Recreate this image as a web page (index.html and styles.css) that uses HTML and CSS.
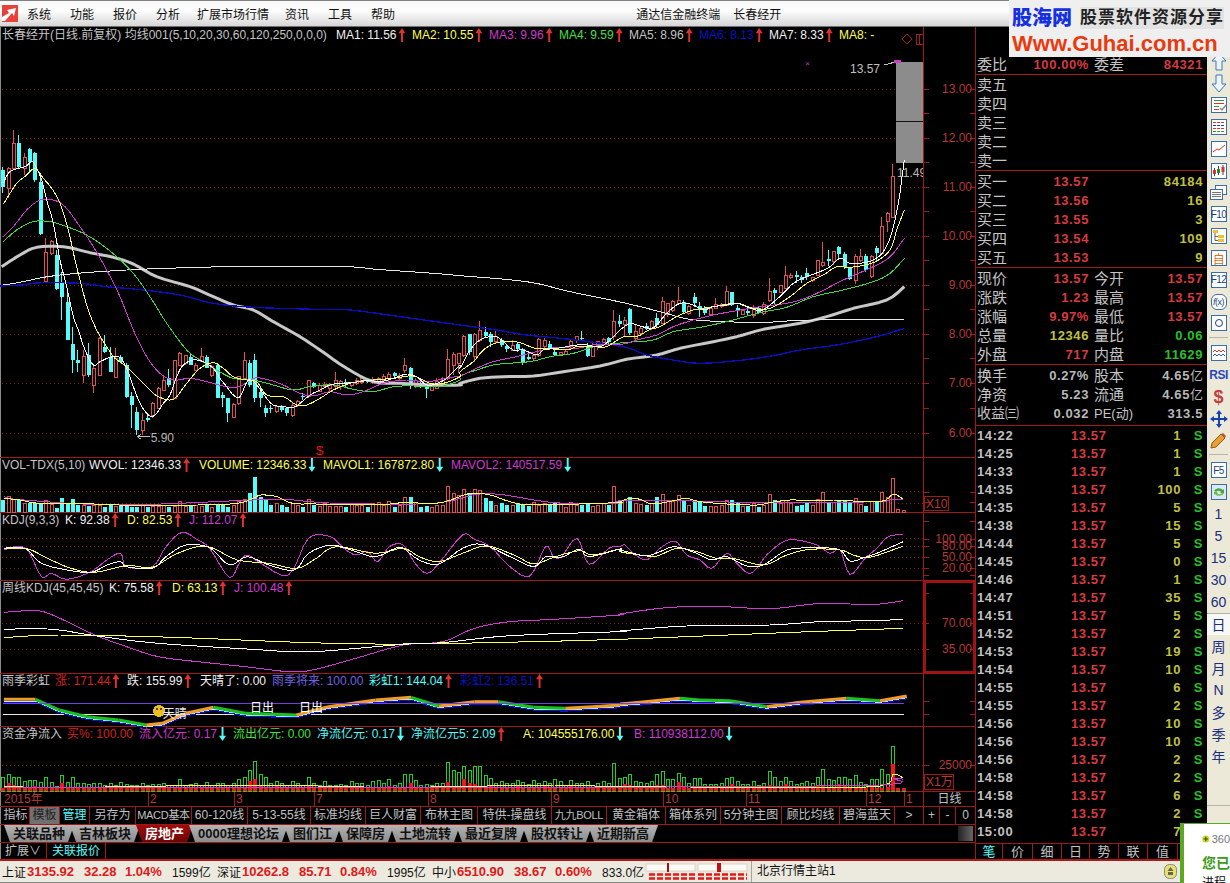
FILE: index.html
```html
<!DOCTYPE html>
<html lang="zh-CN">
<head>
    <meta charset="UTF-8">
    <title>通达信金融终端 长春经开</title>
    <link rel="stylesheet" href="styles.css">
</head>
<body>
<div class="app">
    <div class="titlebar">
        <svg class="app-icon" width="16" height="17" viewBox="0 0 16 17"><rect width="16" height="17" fill="#e8413a"/><path d="M0 12 L7 8 L5 5 L14 3 L12 11 L10 8 L3 16 L0 16Z" fill="#fff"/></svg>
        <span class="menu">系统</span>
        <span class="menu">功能</span>
        <span class="menu">报价</span>
        <span class="menu">分析</span>
        <span class="menu">扩展市场行情</span>
        <span class="menu">资讯</span>
        <span class="menu">工具</span>
        <span class="menu">帮助</span>
        <span class="app-title">通达信金融终端</span>
        <span class="app-title">长春经开</span>
    </div>

    <div class="main">
        <div class="chart">
            <div class="pane pane-main">
                <div class="plot">
                    <svg id="p-main"></svg>
                    <div class="head head-main">
                        <span class="c-gray">长春经开(日线.前复权) 均线001(5,10,20,30,60,120,250,0,0,0)</span>
                        <span class="c-white">MA1: 11.56<i class="up"></i></span>
                        <span class="c-yellow">MA2: 10.55<i class="up"></i></span>
                        <span class="c-magenta">MA3: 9.96<i class="up"></i></span>
                        <span class="c-green">MA4: 9.59<i class="up"></i></span>
                        <span class="c-gray">MA5: 8.96<i class="up"></i></span>
                        <span class="c-blue">MA6: 8.13<i class="up"></i></span>
                        <span class="c-white">MA7: 8.33<i class="up"></i></span>
                        <span class="c-yellow">MA8: -</span>
                    </div>
                </div>
                <svg class="axis" id="a-main"></svg>
            </div>
            <div class="pane pane-vol">
                <div class="plot">
                    <svg id="p-vol"></svg>
                    <div class="head head-vol">
                        <span class="c-gray">VOL-TDX(5,10)</span>
                        <span class="c-white">WVOL: 12346.33<i class="up"></i></span>
                        <span class="c-yellow">VOLUME: 12346.33<i class="down"></i></span>
                        <span class="c-yellow">MAVOL1: 167872.80<i class="down"></i></span>
                        <span class="c-magenta">MAVOL2: 140517.59<i class="down"></i></span>
                    </div>
                </div>
                <svg class="axis" id="a-vol"></svg>
            </div>
            <div class="pane pane-kdj">
                <div class="plot">
                    <svg id="p-kdj"></svg>
                    <div class="head head-kdj">
                        <span class="c-gray">KDJ(9,3,3)</span>
                        <span class="c-white">K: 92.38<i class="up"></i></span>
                        <span class="c-yellow">D: 82.53<i class="up"></i></span>
                        <span class="c-magenta">J: 112.07<i class="up"></i></span>
                    </div>
                </div>
                <svg class="axis" id="a-kdj"></svg>
            </div>
            <div class="pane pane-week">
                <div class="plot">
                    <svg id="p-week"></svg>
                    <div class="head head-week">
                        <span class="c-gray">周线KDJ(45,45,45)</span>
                        <span class="c-white">K: 75.58<i class="up"></i></span>
                        <span class="c-yellow">D: 63.13<i class="up"></i></span>
                        <span class="c-magenta">J: 100.48<i class="up"></i></span>
                    </div>
                </div>
                <svg class="axis" id="a-week"></svg>
            </div>
            <div class="pane pane-rain">
                <div class="plot">
                    <svg id="p-rain"></svg>
                    <div class="head head-rain">
                        <span class="c-gray">雨季彩虹</span>
                        <span class="c-red">涨: 171.44<i class="up"></i></span>
                        <span class="c-white">跌: 155.99<i class="up"></i></span>
                        <span class="c-white">天晴了: 0.00</span>
                        <span class="c-purple">雨季将来: 100.00</span>
                        <span class="c-cyan">彩虹1: 144.04<i class="up"></i></span>
                        <span class="c-blue">彩虹2: 136.51<i class="up"></i></span>
                    </div>
                </div>
                <svg class="axis" id="a-rain"></svg>
            </div>
            <div class="pane pane-money">
                <div class="plot">
                    <svg id="p-money"></svg>
                    <div class="head head-money">
                        <span class="c-gray">资金净流入</span>
                        <span class="c-red">买%: 100.00</span>
                        <span class="c-magenta">流入亿元: 0.17<i class="down"></i></span>
                        <span class="c-green">流出亿元: 0.00</span>
                        <span class="c-cyan">净流亿元: 0.17<i class="down"></i></span>
                        <span class="c-cyan">净流亿元5: 2.09<i class="up"></i></span>
                        <span class="c-yellow">A: 104555176.00<i class="down"></i></span>
                        <span class="c-magenta">B: 110938112.00<i class="down"></i></span>
                    </div>
                </div>
                <svg class="axis" id="a-money"></svg>
            </div>
            <div class="pane pane-dates">
                <div class="plot"><svg id="p-dates"></svg></div>
                <div class="period">日线</div>
            </div>

            <div class="tabrow">
                <span>指标</span>
                <span class="tab-on">模板</span>
                <span class="c-cyan">管理</span>
                <span>另存为</span>
                <span class="tab-tight">MACD基本</span>
                <span>60-120线</span>
                <span>5-13-55线</span>
                <span>标准均线</span>
                <span>巨人财富</span>
                <span>布林主图</span>
                <span>特供-操盘线</span>
                <span class="tab-tight">九九BOLL</span>
                <span>黄金箱体</span>
                <span>箱体系列</span>
                <span>5分钟主图</span>
                <span>顾比均线</span>
                <span>碧海蓝天</span>
                <span>&gt;</span>
                <span>+</span>
                <span>-</span>
                <span>0</span>
            </div>

            <div class="blockrow">
                <span class="btab">关联品种</span>
                <span class="btab">吉林板块</span>
                <span class="btab btab-on">房地产</span>
                <span class="btab">0000理想论坛</span>
                <span class="btab">图们江</span>
                <span class="btab">保障房</span>
                <span class="btab">土地流转</span>
                <span class="btab">最近复牌</span>
                <span class="btab">股权转让</span>
                <span class="btab">近期新高</span>
                <span class="thumb"></span>
            </div>

            <div class="extrow">
                <span>扩展∨</span>
                <span class="c-cyan">关联报价</span>
            </div>
        </div>

        <div class="quote">
            <div class="q-sec q-first">
                <div class="q-row"><span class="lb">委比</span><span class="v-red">100.00%</span><span class="lb">委差</span><span class="v-red">84321</span></div>
            </div>
            <div class="q-sec">
                <div class="q-row"><span class="lb">卖五</span></div>
                <div class="q-row"><span class="lb">卖四</span></div>
                <div class="q-row"><span class="lb">卖三</span></div>
                <div class="q-row"><span class="lb">卖二</span></div>
                <div class="q-row"><span class="lb">卖一</span></div>
            </div>
            <div class="q-sec q-pad">
                <div class="q-row"><span class="lb">买一</span><span class="v-red">13.57</span><span></span><span class="v-olive">84184</span></div>
                <div class="q-row"><span class="lb">买二</span><span class="v-red">13.56</span><span></span><span class="v-olive">16</span></div>
                <div class="q-row"><span class="lb">买三</span><span class="v-red">13.55</span><span></span><span class="v-olive">3</span></div>
                <div class="q-row"><span class="lb">买四</span><span class="v-red">13.54</span><span></span><span class="v-olive">109</span></div>
                <div class="q-row"><span class="lb">买五</span><span class="v-red">13.53</span><span></span><span class="v-olive">9</span></div>
            </div>
            <div class="q-sec q-pad">
                <div class="q-row"><span class="lb">现价</span><span class="v-red">13.57</span><span class="lb">今开</span><span class="v-red">13.57</span></div>
                <div class="q-row"><span class="lb">涨跌</span><span class="v-red">1.23</span><span class="lb">最高</span><span class="v-red">13.57</span></div>
                <div class="q-row"><span class="lb">涨幅</span><span class="v-red">9.97%</span><span class="lb">最低</span><span class="v-red">13.57</span></div>
                <div class="q-row"><span class="lb">总量</span><span class="v-olive">12346</span><span class="lb">量比</span><span class="v-green">0.06</span></div>
                <div class="q-row"><span class="lb">外盘</span><span class="v-red">717</span><span class="lb">内盘</span><span class="v-green">11629</span></div>
            </div>
            <div class="q-sec q-last">
                <div class="q-row"><span class="lb">换手</span><span class="v-gray">0.27%</span><span class="lb">股本</span><span class="v-gray">4.65<em>亿</em></span></div>
                <div class="q-row"><span class="lb">净资</span><span class="v-gray">5.23</span><span class="lb">流通</span><span class="v-gray">4.65<em>亿</em></span></div>
                <div class="q-row"><span class="lb lb-wide">收益㈢</span><span class="v-gray">0.032</span><span class="lb lb-pe">PE(动)</span><span class="v-gray">313.5</span></div>
            </div>
            <div class="ticks" id="ticks">
                <div class="t-row"><span>14:22</span><span>13.57</span><span>1</span><span>S</span></div>
                <div class="t-row"><span>14:25</span><span>13.57</span><span>1</span><span>S</span></div>
                <div class="t-row"><span>14:33</span><span>13.57</span><span>1</span><span>S</span></div>
                <div class="t-row"><span>14:35</span><span>13.57</span><span>100</span><span>S</span></div>
                <div class="t-row"><span>14:35</span><span>13.57</span><span>5</span><span>S</span></div>
                <div class="t-row"><span>14:38</span><span>13.57</span><span>15</span><span>S</span></div>
                <div class="t-row"><span>14:44</span><span>13.57</span><span>5</span><span>S</span></div>
                <div class="t-row"><span>14:45</span><span>13.57</span><span>0</span><span>S</span></div>
                <div class="t-row"><span>14:46</span><span>13.57</span><span>1</span><span>S</span></div>
                <div class="t-row"><span>14:47</span><span>13.57</span><span>35</span><span>S</span></div>
                <div class="t-row"><span>14:51</span><span>13.57</span><span>5</span><span>S</span></div>
                <div class="t-row"><span>14:52</span><span>13.57</span><span>2</span><span>S</span></div>
                <div class="t-row"><span>14:53</span><span>13.57</span><span>19</span><span>S</span></div>
                <div class="t-row"><span>14:54</span><span>13.57</span><span>10</span><span>S</span></div>
                <div class="t-row"><span>14:55</span><span>13.57</span><span>6</span><span>S</span></div>
                <div class="t-row"><span>14:55</span><span>13.57</span><span>2</span><span>S</span></div>
                <div class="t-row"><span>14:56</span><span>13.57</span><span>10</span><span>S</span></div>
                <div class="t-row"><span>14:56</span><span>13.57</span><span>10</span><span>S</span></div>
                <div class="t-row"><span>14:56</span><span>13.57</span><span>2</span><span>S</span></div>
                <div class="t-row"><span>14:58</span><span>13.57</span><span>2</span><span>S</span></div>
                <div class="t-row"><span>14:58</span><span>13.57</span><span>6</span><span>S</span></div>
                <div class="t-row"><span>14:58</span><span>13.57</span><span>2</span><span>S</span></div>
                <div class="t-row"><span>15:00</span><span>13.57</span><span>7</span><span></span></div>
            </div>
            <div class="q-tabs">
                <span class="c-cyan">笔</span><span>价</span><span>细</span><span>日</span><span>势</span><span>联</span><span>值</span><span></span>
            </div>
        </div>

        <div class="toolbar">
            <div class="tool"><svg width="16" height="19" viewBox="0 0 16 19"><path d="M8 1 L15 9 H11 V18 H5 V9 H1Z" fill="#eef4fb" stroke="#3a78c0"/></svg></div>
            <div class="tool"><svg width="16" height="19" viewBox="0 0 16 19"><path d="M8 18 L15 10 H11 V1 H5 V10 H1Z" fill="#eef4fb" stroke="#3a78c0"/></svg></div>
            <div class="tool"><svg width="16" height="16" viewBox="0 0 16 16"><rect x=".5" y=".5" width="15" height="15" fill="#fff" stroke="#3a6ea5"/><path d="M3 3.5h10" stroke="#2a9a3a"/><path d="M3 6.5h10" stroke="#d8342c"/><path d="M3 9.5h5" stroke="#2a9a3a"/><path d="M3 12.5h5" stroke="#d8342c"/><path d="M9 11l2 2 4-5" fill="none" stroke="#888" stroke-width="1.5"/></svg></div>
            <div class="tool"><svg width="16" height="16" viewBox="0 0 16 16"><rect x=".5" y=".5" width="15" height="15" fill="#fff" stroke="#3a6ea5"/><path d="M2 3.5h12" stroke="#d8342c" stroke-dasharray="3 1"/><path d="M2 6.5h12" stroke="#1a3fae" stroke-dasharray="3 1"/><path d="M2 9.5h12" stroke="#d8342c" stroke-dasharray="3 1"/><path d="M2 12.5h12" stroke="#2a9a3a" stroke-dasharray="3 1"/></svg></div>
            <div class="tool"><svg width="16" height="16" viewBox="0 0 16 16"><rect x=".5" y=".5" width="15" height="15" fill="#fff" stroke="#3a6ea5"/><path d="M2 11 L6 8 L8 9 L14 4" fill="none" stroke="#d8342c"/></svg></div>
            <div class="tool"><svg width="16" height="16" viewBox="0 0 16 16"><rect x=".5" y=".5" width="15" height="15" fill="#fff" stroke="#3a6ea5"/><path d="M3.5 5v8M7.5 3v9M12 2v10" stroke="#444"/><rect x="2" y="7" width="3" height="4" fill="#d8342c"/><rect x="6" y="6" width="3" height="4" fill="#1d8a30"/><rect x="10.5" y="4" width="3" height="5" fill="#d8342c"/></svg></div>
            <div class="tool"><svg width="17" height="15" viewBox="0 0 17 15"><rect x="5.5" y=".5" width="11" height="9" fill="#fff" stroke="#3a6ea5"/><rect x=".5" y="4.5" width="12" height="10" fill="#fff" stroke="#3a6ea5"/><path d="M2 7.5h9M2 9.5h9M2 11.5h9" stroke="#777"/></svg></div>
            <div class="tool"><span class="tb-box">F10</span></div>
            <div class="tool"><svg width="16" height="16" viewBox="0 0 16 16"><rect x=".5" y=".5" width="15" height="15" fill="#fff" stroke="#3a6ea5"/><rect x="2" y="2" width="5" height="3" fill="#f0c030"/><rect x="7" y="7" width="6" height="3" fill="#f0c030"/><rect x="7" y="11" width="6" height="3" fill="#f0c030"/><path d="M4 5v7.5h3M4 8.5h3" fill="none" stroke="#666"/></svg></div>
            <div class="tool"><span class="tb-box tb-orange">自</span></div>
            <div class="tool"><span class="tb-box">F12</span></div>
            <div class="tool"><span class="tb-box tb-round"><em>f</em>(x)</span></div>
            <div class="tool"><svg width="16" height="16" viewBox="0 0 16 16"><rect x=".5" y=".5" width="15" height="15" fill="#fff" stroke="#3a6ea5"/><circle cx="8" cy="8" r="3.5" fill="none" stroke="#1a3f7e"/></svg></div>
            <div class="tool-sep"></div>
            <div class="tool"><svg width="16" height="16" viewBox="0 0 16 16"><rect x=".5" y=".5" width="15" height="15" fill="#fff" stroke="#3a6ea5"/><path d="M2 7l2-2 2 2 2-2 2 2 2-2 2 2" fill="none" stroke="#d8342c"/><path d="M2 11l2-2 2 2 2-2 2 2 2-2 2 2" fill="none" stroke="#3a4fc0"/></svg></div>
            <div class="tool"><span class="tb-rsi">RSI</span></div>
            <div class="tool"><span class="tb-dollar">$</span></div>
            <div class="tool"><svg width="18" height="18" viewBox="0 0 18 18"><path d="M9 0l3 4h-2v4h4V6l4 3-4 3v-2h-4v4h2l-3 4-3-4h2v-4H4v2L0 9l4-3v2h4V4H6Z" fill="#1440b0"/></svg></div>
            <div class="tool"><svg width="17" height="17" viewBox="0 0 17 17"><path d="M1 16l1-5L11 2l4 4-9 9Z" fill="#e8a030" stroke="#8a5a18"/><path d="M11 2l2-1 3 3-1 2Z" fill="#c85040"/></svg></div>
            <div class="tool-sep"></div>
            <div class="tool"><span class="tb-box">F5</span></div>
            <div class="tool"><svg width="16" height="16" viewBox="0 0 16 16"><rect x=".5" y=".5" width="15" height="15" fill="#dce8f8" stroke="#3a6ea5"/><path d="M3 7a5 4 0 0 1 9-1l1-1v4h-4l1-1a3 3 0 0 0-5 0Z" fill="#4aa83a"/><path d="M13 9a5 4 0 0 1-9 1l-1 1V8h4l-1 1a3 3 0 0 0 5 0Z" fill="#6cc04a"/></svg></div>
            <div class="tool tool-txt">1</div>
            <div class="tool tool-txt">5</div>
            <div class="tool tool-txt">15</div>
            <div class="tool tool-txt">30</div>
            <div class="tool tool-txt">60</div>
            <div class="tool tool-txt tool-on">日</div>
            <div class="tool tool-txt">周</div>
            <div class="tool tool-txt">月</div>
            <div class="tool tool-txt">N</div>
            <div class="tool tool-txt">多</div>
            <div class="tool tool-txt">季</div>
            <div class="tool tool-txt">年</div>
            <div class="tool-end"></div>
        </div>
    </div>

    <div class="statusbar">
        <span class="st-name">上证</span><b class="st-a">3135.92</b><b class="st-b">32.28</b><b class="st-c">1.04%</b><span class="st-d">1599亿</span>
        <span class="st-name st-next">深证</span><b class="st-a">10262.8</b><b class="st-b">85.71</b><b class="st-c">0.84%</b><span class="st-d">1995亿</span>
        <span class="st-name st-next">中小</span><b class="st-a">6510.90</b><b class="st-b">38.67</b><b class="st-c">0.60%</b><span class="st-d">833.0亿</span>
        <svg class="signal" width="104" height="20" viewBox="0 0 104 20">
            <rect x="1" y="2" width="49" height="7" fill="#fbfaf4" stroke="#d8d4c6"/>
            <rect x="53" y="2" width="49" height="7" fill="#fbfaf4" stroke="#d8d4c6"/>
            <rect x="22" y="1" width="2" height="9" fill="#a01010"/>
            <rect x="72" y="1" width="4" height="9" fill="#c01010"/>
            <path d="M4 12.5h46M4 16.5h46M53 12.5h49M53 16.5h49" stroke="#e01818" stroke-width="2.5" stroke-dasharray="6 2"/>
        </svg>
        <span class="station">北京行情主站1</span>
        <svg class="st-icon" width="13" height="15" viewBox="0 0 13 15"><rect x=".5" y=".5" width="12" height="14" rx="5" fill="#e8e070" stroke="#888"/><path d="M6.5 3l3 4h-6Z M4 8h5v3H4Z" fill="#665"/></svg>
    </div>

    <div class="logo">
        <div class="logo-top"><b>股海网</b><span>股票软件资源分享</span></div>
        <div class="logo-url">Www.Guhai.com.cn</div>
    </div>

    <div class="popup">
        <div class="popup-top"><svg width="14" height="14" viewBox="0 0 14 14"><circle cx="7" cy="7" r="6.5" fill="#d8d020"/><path d="M6 3h2v3h3v2H8v3H6V8H3V6h3Z" fill="#1a5a10"/></svg><span>360</span></div>
        <div class="popup-title">您已经</div>
        <div class="popup-text">进程</div>
    </div>
</div>
<script src="chart.js"></script>
</body>
</html>
```

FILE: styles.css
```css
* {
    margin: 0;
    padding: 0;
    box-sizing: border-box;
}

html, body {
    width: 1230px;
    height: 883px;
    overflow: hidden;
    background: #000;
}

body {
    font-family: "Liberation Sans", "Noto Sans CJK SC", sans-serif;
    font-size: 12px;
    color: #c0c0c0;
}

i, em { font-style: normal; }

.c-gray { color: #c4c4c4; }
.c-white { color: #f0f0f0; }
.c-yellow { color: #ffff50; }
.c-magenta { color: #d038d0; }
.c-green { color: #40e040; }
.c-blue { color: #0a10c0; }
.c-red { color: #d82020; }
.c-purple { color: #7060e0; }
.c-cyan { color: #54fcfc; }

.app {
    position: relative;
    width: 1230px;
    height: 883px;
    display: flex;
    flex-direction: column;
}

/* title bar */
.titlebar {
    height: 27px;
    flex-shrink: 0;
    display: flex;
    align-items: center;
    padding-left: 2px;
    border-top: 1px solid #808080;
    border-bottom: 1px solid #707070;
    background: linear-gradient(#f8f8f8, #fdfdfd 40%, #d6d6d6);
    color: #111;
}

.app-icon { margin-right: 9px; }
.menu { margin-right: 19px; }
.menu:nth-of-type(4) { margin-right: 17px; }
.menu:nth-of-type(5) { margin-right: 16px; }
.app-title { margin-right: 13px; }
.menu + .app-title { margin-left: 222px; }

.main {
    flex: 1;
    display: flex;
    min-height: 0;
}

/* chart column */
.chart {
    width: 975px;
    flex-shrink: 0;
    box-shadow: inset 1px 0 #8a8a8a;
}

.pane {
    display: flex;
    border-bottom: 1px solid #a01818;
}

.pane-main { height: 431px; }
.pane-vol { height: 55px; }
.pane-kdj { height: 68px; }
.pane-week { height: 93px; }
.pane-rain { height: 53px; }
.pane-money { height: 65px; }
.pane-dates { height: 15px; }

.plot {
    position: relative;
    width: 923px;
    flex-shrink: 0;
}

.plot svg {
    display: block;
    shape-rendering: crispEdges;
    overflow: hidden;
}

.plot text, .axis text {
    font-family: "Liberation Sans", "Noto Sans CJK SC", sans-serif;
}

.axis {
    display: block;
    width: 52px;
    shape-rendering: crispEdges;
    font-size: 12px;
}

.head {
    position: absolute;
    top: 0;
    left: 0;
    padding-left: 2px;
    display: grid;
    white-space: nowrap;
    line-height: 15px;
}

.head-main { grid-template-columns: 334px 76px 77px 70px 70px 70px 70px 70px auto; }
.head-vol { grid-template-columns: 87px 110px 124px 128px auto; }
.head-kdj { grid-template-columns: 63px 62px 62px auto; }
.head-week { grid-template-columns: 107px 63px 62px auto; }
.head-rain { grid-template-columns: 53px 72px 73px 72px 97px 91px auto; }
.head-money { grid-template-columns: 65px 72px 94px 84px 94px 112px 111px auto; }
.pane-main .head { top: 1px; }

.up, .down {
    display: inline-block;
    width: 7px;
    height: 14px;
    margin-left: 2px;
    vertical-align: -3px;
}

.up {
    background: #e03030;
    clip-path: polygon(50% 0, 100% 38%, 64% 38%, 64% 100%, 36% 100%, 36% 38%, 0 38%);
}

.down {
    background: #54fcfc;
    clip-path: polygon(36% 0, 64% 0, 64% 62%, 100% 62%, 50% 100%, 0 62%, 36% 62%);
}

.period {
    width: 52px;
    border-left: 1px solid #a01818;
    color: #c0c0c0;
    text-align: center;
    line-height: 14px;
}

/* template row */
.tabrow {
    height: 18px;
    padding-left: 2px;
    display: grid;
    grid-template-columns: 28px 30px 30px 46px 56px 56px 63px 55px 55px 57px 74px 55px 59px 55px 61px 58px 55px 29px 16px 16px 19px;
    border-bottom: 1px solid #a01818;
    line-height: 17px;
    text-align: center;
    white-space: nowrap;
    box-shadow: inset 1px 0 #8a8a8a;
}

.tabrow span {
    border-right: 1px solid #a01818;
    overflow: hidden;
}

.tabrow span:last-child { border-right: none; }

.tabrow .tab-tight {
    font-size: 11px;
    letter-spacing: -.3px;
}

.tab-on {
    background: #707070;
    color: #222;
}

/* block tabs */
.blockrow {
    position: relative;
    height: 18px;
    padding-left: 4px;
    display: flex;
    border-bottom: 1px solid #a01818;
    box-shadow: inset 1px 0 #8a8a8a;
}

.btab {
    height: 17px;
    padding: 0 9px;
    margin-right: -4px;
    background: linear-gradient(#b4b4b4, #8c8c8c);
    clip-path: polygon(0 0, 100% 0, calc(100% - 6px) 100%, 6px 100%);
    color: #111;
    font-size: 13px;
    font-weight: 700;
    line-height: 17px;
    white-space: nowrap;
}

.btab-on {
    background: linear-gradient(#a00c0c, #6a0606);
    color: #fff;
}

.thumb {
    position: absolute;
    left: 958px;
    top: 1px;
    width: 15px;
    height: 15px;
    background: linear-gradient(90deg, #222, #666);
}

.extrow {
    height: 18px;
    display: flex;
    border-bottom: 2px solid #b01818;
    line-height: 16px;
    box-shadow: inset 1px 0 #8a8a8a;
}

.extrow span {
    padding: 0 5px;
    border-right: 1px solid #a01818;
    white-space: nowrap;
}

/* quote panel */
.quote {
    width: 232px;
    flex-shrink: 0;
    border-left: 1px solid #a01818;
    display: flex;
    flex-direction: column;
}

.q-sec { border-bottom: 1px solid #a01818; }
.q-first { padding-top: 28px; }
.q-pad { padding-top: 1px; }
.q-last { height: 61px; padding-top: 1px; }

.q-row {
    height: 19px;
    padding-left: 1px;
    display: grid;
    grid-template-columns: 46px 66px 5px 37px 72px;
    align-items: center;
    line-height: 19px;
    white-space: nowrap;
}

.q-row .lb {
    font-size: 15px;
    color: #c4c4c4;
}

.q-row span:nth-child(2) { grid-column: 2; }
.q-row span:nth-child(3) { grid-column: 4; }
.q-row span:nth-child(4) { grid-column: 5; }

.q-row .lb-pe { font-size: 13px; }
.q-row .lb-wide { font-size: 14px; }

.v-red, .v-olive, .v-green, .v-gray {
    font-size: 13px;
    font-weight: 700;
    letter-spacing: .6px;
    text-align: right;
}

.v-red { color: #d83a40; }
.v-olive { color: #c0c040; }
.v-green { color: #28c028; }
.v-gray { color: #b8b8b8; }
.v-gray em { font-size: 13px; font-weight: 400; letter-spacing: 0; }

.ticks { padding-bottom: 3px; }

.t-row {
    height: 18px;
    padding-left: 1px;
    display: grid;
    grid-template-columns: 94px 36px 74px 22px;
    align-items: center;
    font-size: 13px;
    font-weight: 700;
    letter-spacing: .6px;
}

.t-row span:nth-child(2) { color: #d83a40; }
.t-row span:nth-child(3) { color: #c0c040; text-align: right; }
.t-row span:nth-child(4) { color: #28c028; text-align: right; }

.q-tabs {
    flex: 1;
    display: grid;
    grid-template-columns: 27px 30px 29px 28px 29px 29px 30px 1fr;
    border-top: 1px solid #a01818;
    border-bottom: 2px solid #b01818;
    text-align: center;
    font-size: 13px;
    line-height: 15px;
}

.q-tabs span { border-right: 1px solid #a01818; }
.q-tabs span:last-child { border-right: none; }

/* right toolbar */
.toolbar {
    width: 23px;
    flex-shrink: 0;
    background: #ece9d8;
    padding-top: 24px;
    display: flex;
    flex-direction: column;
    align-items: stretch;
}

.tool {
    height: 21.8px;
    flex-shrink: 0;
    display: flex;
    align-items: center;
    justify-content: center;
    color: #1a2f7e;
    font-size: 14px;
}

.tool-txt { height: 22px; }
.tool-on { background: #f8f8f4; border-top: 1px solid #b0b0a8; }

.tool-sep {
    height: 1px;
    margin: 3px 2px 4px;
    background: #b8b6a8;
    flex-shrink: 0;
}

.tool-end {
    margin-top: 38px;
    height: 1px;
    background: #b8b6a8;
}

.tb-box {
    width: 16px;
    height: 16px;
    display: flex;
    align-items: center;
    justify-content: center;
    background: #fff;
    border: 1px solid #3a6ea5;
    color: #1a3f7e;
    font-size: 10px;
    letter-spacing: -.5px;
    white-space: nowrap;
}

.tb-orange { color: #d87020; font-size: 12px; }
.tb-round { border-radius: 6px; font-size: 9px; }
.tb-round em { font-style: italic; }

.tb-rsi {
    color: #2a48b8;
    font-weight: 700;
    font-size: 12px;
    letter-spacing: -.5px;
}

.tb-dollar {
    color: #c04040;
    font-weight: 700;
    font-size: 18px;
    line-height: 18px;
}

/* status bar */
.statusbar {
    position: relative;
    height: 22px;
    flex-shrink: 0;
    display: flex;
    align-items: center;
    padding-left: 2px;
    background: #ece9df;
    border-bottom: 1px solid #888;
    color: #111;
    white-space: nowrap;
}

.statusbar b {
    color: #e01818;
    font-size: 13px;
}

.st-a { margin-left: 1px; width: 46px; }
.st-b { margin-left: 11px; width: 30px; }
.st-c { margin-left: 11px; width: 36px; }
.st-d { margin-left: 11px; width: 36px; }
.st-next { margin-left: 9px; }

.signal { margin-left: 7px; }

.station {
    margin-left: 2px;
    padding-left: 5px;
    border-left: 1px solid #a8a498;
    line-height: 21px;
}

.st-icon { margin-left: auto; margin-right: 53px; }

/* overlays */
.logo {
    position: absolute;
    right: 0;
    top: 0;
    width: 221px;
    height: 57px;
    padding: 7px 0 0 3px;
    background: #efefef;
}

.logo-top {
    display: flex;
    align-items: center;
    line-height: 22px;
}

.logo-top b {
    color: #1430e0;
    font-size: 20px;
    font-weight: 900;
    width: 68px;
}

.logo-top span {
    color: #222;
    font-size: 17px;
    font-weight: 700;
    letter-spacing: 1px;
    white-space: nowrap;
    background: #e2e2e2;
}

.logo-url {
    margin-top: 3px;
    color: #e83a10;
    font-size: 22px;
    font-weight: 700;
    line-height: 23px;
    white-space: nowrap;
}

.popup {
    position: absolute;
    left: 1180px;
    top: 823px;
    width: 50px;
    height: 60px;
    padding: 8px 0 0 18px;
    background: #fff;
    border-left: 4px solid #5aa91e;
    border-top: 1px solid #5aa91e;
    overflow: hidden;
    white-space: nowrap;
}

.popup-top {
    display: flex;
    align-items: center;
    gap: 2px;
    color: #777;
    font-size: 11px;
}

.popup-title {
    margin-top: 9px;
    color: #3c9a1a;
    font-size: 14px;
    font-weight: 700;
    line-height: 16px;
}

.popup-text {
    margin-top: 4px;
    color: #111;
    line-height: 16px;
}
```

FILE: chart.js
```js
// all chart y values are 3x screen px, counted from the crop origin of each pane group
var RED = '#e05050', CYAN = '#54fcfc', GRID = '#7a1a1a', LINE = '#a01818', AXIS = '#b83838';

// [0 cyan / 1 red, wick top, body top, body bottom, wick bottom]
var candles = [
  [0,140,150,200,218],[1,140,145,205,235],[1,30,70,145,150],[0,45,68,140,145],[1,100,112,145,165],
  [0,85,88,125,155],[0,95,100,180,185],[0,170,185,342,345],[1,355,398,485,488],[1,360,365,400,405],
  [0,390,405,508,510],[0,455,490,530,600],[0,520,545,660,660],[0,620,672,720,760],[0,690,720,730,755],
  [1,690,710,765,790],[0,670,705,765,770],[1,735,745,795,820],[1,650,655,765,765],[0,645,680,695,700],
  [0,680,710,755,755],[1,685,715,772,772],[0,705,710,725,730],[0,730,735,832,835],[0,815,828,855,925],
  [0,860,875,930,945],[1,880,900,930,945],[0,885,895,900,905],[1,845,850,885,895],[1,800,805,865,865],
  [1,765,780,810,810],[0,748,775,795,800],[1,720,722,835,835],[1,695,700,735,735],[1,705,707,730,735],
  [0,700,712,735,735],[1,730,735,750,750],[1,685,710,725,725],[0,705,710,745,745],[1,735,740,765,770],
  [0,730,735,835,835],[0,815,825,835,860],[0,835,835,878,905],[1,850,852,892,892],[1,770,770,850,855],
  [1,695,722,775,780],[0,720,730,795,800],[0,703,720,835,845],[0,800,815,835,860],[0,855,865,880,890],
  [0,855,865,868,880],[1,855,860,875,880],[0,855,858,870,875],[0,860,865,878,888],[1,850,855,885,890],
  [1,840,843,855,860],[0,820,828,830,840],[1,780,782,830,835],[0,785,790,800,805],[1,790,795,815,815],
  [1,785,792,800,805],[1,790,795,805,812],[1,755,780,800,805],[1,780,785,800,810],[0,778,785,790,800],
  [1,785,788,795,800],[1,775,780,790,795],[1,770,775,788,792],[0,775,780,785,790],[1,770,778,788,792],
  [1,770,775,785,790],[1,762,768,780,785],[1,757,762,775,785],[0,755,760,768,772],[1,760,765,775,780],
  [1,715,735,752,758],[0,742,745,790,808],[1,775,780,795,805],[0,785,790,800,805],[0,795,800,808,835],
  [1,795,800,810,812],[1,775,785,805,808],[1,770,775,795,800],[1,688,718,775,780],[1,695,703,735,765],
  [1,698,700,730,760],[1,645,648,705,710],[0,642,643,695,705],[1,640,642,710,725],[1,603,632,660,665],
  [0,622,637,647,655],[0,635,642,665,680],[1,630,650,665,670],[0,655,660,675,680],[0,672,678,688,695],
  [1,660,675,690,692],[0,665,672,688,695],[0,685,688,725,735],[0,700,712,718,720],[1,702,705,715,720],
  [1,655,657,705,710],[1,655,660,680,690],[0,662,672,685,690],[0,690,695,705,708],[1,695,698,702,705],
  [1,690,693,703,705],[1,660,665,680,690],[1,650,650,662,670],[0,632,655,658,662],[0,670,680,708,712],
  [1,670,680,708,712],[1,665,665,680,690],[1,655,657,668,675],[0,650,655,665,672],[1,570,605,650,660],
  [0,585,602,612,620],[1,590,600,613,650],[0,565,568,640,645],[1,615,635,655,665],[1,620,625,640,645],
  [0,610,618,628,630],[1,600,605,625,630],[0,580,595,615,620],[1,530,545,610,610],[1,548,550,582,590],
  [1,540,545,570,575],[1,500,540,550,555],[0,540,545,575,578],[1,555,560,580,585],[0,520,530,550,560],
  [0,545,558,570,590],[0,558,565,580,585],[1,560,565,582,585],[1,535,553,565,568],[1,550,552,558,565],
  [1,498,515,555,558],[0,515,517,555,558],[0,555,565,572,590],[1,570,572,582,585],[0,565,572,578,585],
  [1,555,565,585,595],[0,560,565,578,582],[1,545,552,580,585],[1,475,515,540,545],[0,505,510,520,555],
  [1,495,497,518,520],[1,437,465,505,505],[1,460,465,473,478],[0,452,465,470,490],[0,465,470,480,490],
  [0,445,458,470,480],[1,470,473,482,485],[1,420,422,465,465],[1,365,427,435,440],[0,390,418,422,437],
  [1,393,395,425,435],[0,378,382,402,415],[0,395,402,440,447],[0,440,442,478,480],[1,403,408,480,492],
  [1,388,410,420,425],[0,402,407,450,455],[1,405,410,470,475],[0,378,385,400,425],[1,290,320,400,405],
  [1,275,280,305,335],[1,133,168,292,295]
];

// top of each volume bar, baseline 186
var vols = [150,140,148,150,160,158,158,162,150,162,175,145,162,148,165,165,168,165,165,170,165,170,162,168,172,170,165,172,168,168,
  165,170,170,155,170,168,165,170,162,172,165,165,172,165,155,148,130,82,140,148,165,160,165,170,160,165,170,148,165,170,
  160,170,170,168,172,160,165,165,172,160,158,165,155,172,165,142,140,158,172,168,172,165,165,108,130,135,118,130,118,120,
  145,152,165,160,165,165,158,162,168,158,165,160,165,155,160,172,158,165,165,160,170,165,160,165,110,152,
  150,142,160,162,165,160,142,133,155,155,137,150,165,152,152,167,168,168,165,152,150,160,168,167,160,170,165,133,150,160,
  150,160,167,165,160,165,148,127,155,158,150,150,155,145,162,168,155,155,128,142,85,178,182];

function X(i) { return Math.round(3.33 + 5.36 * i) * 3; }

function rect(x, y, w, h, fill) {
  return '<rect x="' + x + '" y="' + y + '" width="' + w + '" height="' + Math.max(h, 3) + '" fill="' + fill + '"/>';
}

function box(x, y, w, h, stroke) {
  return '<rect x="' + x + '" y="' + y + '" width="' + w + '" height="' + Math.max(h, 3) + '" fill="#000" stroke="' + stroke + '" stroke-width="3"/>';
}

function poly(points, color, w) {
  var soft = w >= 9 ? ' shape-rendering="auto"' : '';
  return '<polyline fill="none" stroke="' + color + '" stroke-width="' + (w || 3) + '"' + soft + ' stroke-linejoin="round" points="' + points.join(' ') + '"/>';
}

// left crop + right crop, joined into one 3x line and rounded with a catmull-rom pass
function path(left, k, right, off) {
  var p = [], out = [], i, t;
  for (i = 0; i < left.length; i += 2) p.push([left[i] * k, left[i + 1]]);
  for (i = 0; i < right.length; i += 2) p.push([right[i] + off, right[i + 1]]);
  for (i = 0; i < p.length - 1; i++) {
    var a = p[Math.max(i - 1, 0)], b = p[i], c = p[i + 1], d = p[Math.min(i + 2, p.length - 1)];
    for (t = 0; t < 1; t += .25) {
      var t2 = t * t, t3 = t2 * t;
      var x = .5 * (2 * b[0] + (c[0] - a[0]) * t + (2 * a[0] - 5 * b[0] + 4 * c[0] - d[0]) * t2 + (3 * b[0] - a[0] - 3 * c[0] + d[0]) * t3);
      var y = .5 * (2 * b[1] + (c[1] - a[1]) * t + (2 * a[1] - 5 * b[1] + 4 * c[1] - d[1]) * t2 + (3 * b[1] - a[1] - 3 * c[1] + d[1]) * t3);
      out.push(x.toFixed(1) + ',' + y.toFixed(1));
    }
  }
  out.push(p[p.length - 1].join(','));
  return out;
}

function dots(y) {
  return '<line x1="6" x2="2769" y1="' + y + '" y2="' + y + '" stroke="' + GRID + '" stroke-width="3" stroke-dasharray="3 9"/>';
}

function txt(x, y, s, color, size, anchor) {
  return '<text x="' + x + '" y="' + y + '" fill="' + color + '" font-size="' + size + '"' + (anchor ? ' text-anchor="' + anchor + '"' : '') + '>' + s + '</text>';
}

function setPlot(id, top, h, html) {
  var svg = document.getElementById(id);
  svg.setAttribute('viewBox', '0 ' + top + ' 2769 ' + h);
  svg.setAttribute('width', 923);
  svg.setAttribute('height', h / 3);
  svg.innerHTML = html;
}

function setAxis(id, h, labels, ticks, active) {
  var svg = document.getElementById(id), s = '';
  svg.setAttribute('height', h);
  svg.setAttribute('viewBox', '0 0 52 ' + h);
  s += '<rect x="0" y="0" width="1" height="' + h + '" fill="' + LINE + '"/>';
  ticks.forEach(function (t) {
    s += '<rect x="1" y="' + t + '" width="5" height="1" fill="' + LINE + '"/>';
    s += '<rect x="47" y="' + t + '" width="5" height="1" fill="' + LINE + '"/>';
  });
  labels.forEach(function (l) {
    s += '<text x="49" y="' + (l[1] + 4) + '" fill="' + AXIS + '" text-anchor="end">' + l[0] + '</text>';
  });
  if (active) s += '<rect x="2" y="1" width="49" height="' + (h - 3) + '" fill="none" stroke="#a01010" stroke-width="2"/>';
  svg.innerHTML = s;
}

function drawMain() {
  var s = '';
  [-93, 54, 201, 348, 495, 642, 789, 939].forEach(function (y) {
    s += dots(y);
  });
  candles.forEach(function (c, i) {
    var x = X(i), color = c[0] ? RED : CYAN;
    s += rect(x - 3, c[1], 3, c[4] - c[1], color);
    if (c[0]) s += box(x - 4.5, c[2], 9, c[3] - c[2], color);
    else s += rect(x - 6, c[2], 12, c[3] - c[2], color);
  });

  // gray limit-up block
  s += rect(2688, -174, 81, 177, '#8c8c8c') + rect(2688, 6, 81, 123, '#8c8c8c') + rect(2688, 3, 81, 3, '#111');

  s += poly(path([5,440,60,405,110,382,190,380,270,398,340,412,400,432,470,470,570,500,640,530,700,555,760,570,820,605,900,650,960,690,1040,745,1120,785,1200,790,1300,795,1380,795], 1,
    [0,790,60,775,130,770,220,768,310,755,420,738,500,718,590,705,660,685,760,665,830,650,910,628,1020,610,1100,590,1180,565,1280,540,1333,500], 1380), '#c8c8c8', 9);
  s += poly(path([0,498,60,495,130,488,240,490,320,500,430,510,540,525,640,550,760,562,950,568,1050,570,1200,590,1380,615], 1,
    [0,615,110,630,200,645,330,658,490,680,560,705,640,720,720,730,850,720,950,705,1020,690,1130,675,1250,650,1333,625], 1380), '#0c0cc0', 4);
  s += poly(path([10,495,70,485,130,472,230,460,380,450,500,445,700,440,1030,440,1130,448,1300,460,1380,467], 1,
    [0,467,200,485,330,515,490,548,600,575,690,598,800,605,900,608,1000,602,1150,598,1333,597], 1380), '#e8e8e8');
  s += poly(path([10,365,50,330,100,305,150,305,200,320,250,340,300,370,350,410,400,460,450,530,500,610,560,690,600,720,650,750,700,775,760,780,820,795,880,810,930,800,1000,795,1060,808,1120,815,1180,800,1240,798,1320,800,1380,780], 1,
    [0,768,50,750,110,733,210,725,270,710,340,700,410,678,490,668,580,660,640,635,720,622,800,605,900,578,980,562,1060,530,1150,510,1240,485,1290,460,1333,415], 1380), '#40d840');
  s += poly(path([10,350,40,320,80,270,120,240,160,240,195,260,240,320,280,380,320,450,360,530,400,630,440,710,480,760,520,780,570,775,620,785,680,800,720,800,760,775,800,778,850,795,900,820,940,828,990,815,1040,825,1090,815,1150,790,1220,780,1280,785,1340,775,1380,768], 1,
    [0,770,50,745,100,725,170,710,230,695,290,682,350,685,400,675,490,672,530,660,590,645,640,620,700,600,760,585,830,572,900,560,990,548,1060,525,1150,480,1240,440,1290,410,1333,355], 1380), '#d038d0');
  s += poly(path([10,253,30,220,50,190,80,165,105,145,130,175,155,205,180,250,205,330,225,420,245,500,265,570,290,630,320,680,345,715,380,740,420,780,450,810,475,830,520,838,560,790,600,745,640,728,670,745,700,770,740,780,770,785,800,825,850,830,890,855,920,855,960,835,1000,810,1050,790,1100,782,1180,775,1240,768,1290,790,1330,790,1380,770], 1,
    [0,755,40,725,70,690,110,668,150,665,180,668,225,685,260,685,320,690,350,680,400,680,440,680,490,650,530,650,570,628,600,620,650,590,700,570,760,560,830,550,880,565,930,565,990,530,1040,490,1090,465,1130,440,1170,442,1240,428,1290,390,1310,330,1333,270], 1380), '#ffff50');
  s += poly(path([10,190,25,160,45,148,75,140,95,125,105,135,125,180,140,240,160,310,180,420,200,500,220,590,235,630,255,690,280,735,300,725,330,712,360,712,380,745,400,800,420,850,445,885,465,885,490,850,510,825,530,770,550,735,580,720,610,725,640,745,660,775,680,800,700,825,720,830,745,780,770,795,800,835,820,855,850,860,880,862,900,850,930,825,960,810,990,795,1020,790,1060,788,1100,780,1140,785,1180,775,1220,762,1250,770,1280,795,1310,790,1340,775,1380,735], 1,
    [0,745,30,690,60,660,90,650,110,650,130,665,160,690,190,690,230,705,250,690,290,685,320,680,350,675,380,675,420,680,450,660,480,630,510,610,530,615,570,625,590,615,620,580,660,550,700,555,730,570,760,560,800,555,830,550,860,560,900,572,930,555,970,520,1000,490,1040,470,1080,455,1110,440,1140,415,1170,430,1200,430,1240,420,1270,395,1295,340,1315,250,1325,180,1333,120], 1380), '#ffffff');

  // markers on the price chart
  s += '<polyline fill="none" stroke="#c0c0c0" stroke-width="3" points="450,950 412,950 424,942 412,950 424,958"/>';
  s += txt(452, 966, '5.90', '#b8b8b8', 36);
  s += txt(2550, -141, '13.57', '#c0c0c0', 36);
  s += '<polyline fill="none" stroke="#c0c0c0" stroke-width="3" points="2652,-165 2690,-175"/>';
  s += txt(2416, -162, '×', '#d038d0', 24);
  s += rect(2682, -180, 21, 9, '#d038d0');
  s += txt(2691, 170, '11.49', '#b8b8b8', 36);
  s += txt(948, 1005, '$', '#e01818', 40);

  // small diamond and square at the top right
  s += '<path d="M2706 -243 l15 -15 15 15 -15 15Z M2748 -258 h21 v30 h-21Z M2757 -258 v30" fill="none" stroke="#a02020" stroke-width="3"/>';
  setPlot('p-main', -279, 1293, s);
  setAxis('a-main', 431, [['13.00', 62], ['12.00', 111], ['11.00', 160], ['10.00', 209], ['9.00', 258], ['8.00', 307], ['7.00', 356], ['6.00', 406]],
    [62, 86, 111, 135, 160, 184, 209, 233, 258, 282, 307, 331, 356, 381, 406]);
}

function drawVol() {
  var s = dots(125) + dots(160);
  vols.forEach(function (top, i) {
    var up = i >= candles.length ? 1 : candles[i][0], x = X(i);
    if (up) s += box(x - 4.5, top, 9, 186 - top, RED);
    else s += rect(x - 6, top, 12, 186 - top, CYAN);
  });
  s += poly(path([10,140,60,150,300,165,640,150,720,148,850,160,1100,160,1230,130,1400,158,1560,160], 1.186,
    [0,152,190,152,260,155,540,158,770,155,820,148,850,150], 1860), '#d038d0');
  s += poly(path([10,145,50,150,100,160,200,160,300,165,500,165,600,160,640,145,660,135,700,140,740,160,800,162,950,165,1020,158,1100,160,1140,150,1190,130,1240,135,1290,155,1350,165,1560,158], 1.186,
    [0,155,30,145,60,148,100,162,170,150,200,145,240,155,320,162,410,165,450,158,510,150,570,152,640,150,780,155,820,133,850,148], 1860), '#ffff50');
  setPlot('p-vol', 24, 165, s);
  setAxis('a-vol', 55, [], [34, 44]);
  document.getElementById('a-vol').innerHTML += '<rect x="1.5" y="38.5" width="24" height="14" fill="none" stroke="' + LINE + '"/><text x="3" y="50" fill="' + AXIS + '">X10</text>';
}

function drawKdj() {
  var s = dots(265) + dots(290) + dots(322) + dots(355);
  s += poly(path([10,300,40,290,70,300,105,380,130,370,170,388,230,365,270,330,305,310,320,350,385,350,420,290,460,247,500,270,530,295,580,382,605,340,625,315,660,340,730,375,780,265,835,260,870,295,900,315,930,305,955,335,985,290,1020,285,1050,340,1080,370,1110,340,1170,255,1200,268,1240,290,1290,350,1340,378,1380,290,1400,320,1420,320,1460,265,1490,343,1540,295,1568,290], 1.186,
    [0,290,15,285,40,310,80,330,120,295,165,273,200,315,240,330,275,355,320,310,350,340,385,370,410,355,440,315,490,275,530,270,590,285,630,310,660,300,690,373,735,325,770,295,805,260,850,253], 1860), '#d038d0');
  s += poly(path([10,297,70,297,120,325,180,355,240,367,320,347,385,352,440,315,500,290,540,295,600,330,680,340,750,355,800,325,850,290,950,310,1020,295,1060,320,1110,335,1170,310,1230,288,1300,315,1350,342,1400,322,1465,302,1500,315,1568,297], 1.186,
    [0,305,60,315,110,318,170,295,230,305,290,325,340,325,430,345,500,315,570,298,660,300,700,315,750,322,850,288], 1860), '#ffff50');
  s += poly(path([10,295,40,292,70,300,105,340,170,360,230,367,270,345,305,335,320,350,385,355,420,320,470,285,530,293,580,345,625,320,680,345,745,360,780,310,840,285,900,305,950,320,1000,295,1020,295,1060,330,1110,342,1170,295,1220,283,1290,320,1350,350,1380,320,1420,322,1465,297,1490,320,1568,297], 1.186,
    [0,300,40,310,80,318,120,305,165,290,230,310,275,330,320,320,380,348,430,345,490,305,530,295,600,293,660,300,690,333,735,322,770,310,850,275], 1860), '#ffffff');
  setPlot('p-kdj', 189, 204, s);
  setAxis('a-kdj', 68, [['100.00', 26], ['80.00', 33], ['50.00', 44], ['20.00', 55]], [8, 26, 33, 44, 55, 62]);
}

function drawWeek() {
  var s = dots(520) + dots(598);
  s += poly(path([10,487,70,482,110,485,170,515,240,555,320,590,400,620,500,635,620,650,730,665,790,660,900,625,1020,585,1120,575,1200,535,1290,515,1400,508,1568,495], 1.186,
    [0,492,150,472,300,470,400,475,470,475,600,460,690,462,770,463,850,452], 1860), '#d038d0');
  s += poly(path([10,563,150,555,440,562,780,578,1020,582,1350,575,1568,568], 1.186,
    [0,568,250,558,570,545,850,535], 1860), '#ffff50');
  s += poly(path([10,540,70,535,150,540,240,557,400,580,640,598,720,604,810,604,1020,583,1120,578,1290,557,1568,545], 1.186,
    [0,543,200,528,450,525,600,515,760,512,850,508], 1860), '#ffffff');
  setPlot('p-week', 393, 279, s);
  setAxis('a-week', 93, [['70.00', 42], ['35.00', 68]], [12, 42, 68], true);
}

function drawRain() {
  var band = [10,748,90,748,150,780,220,800,300,810,370,825,410,820,470,790,540,772,620,790,750,795,830,770,950,750,1040,742,1110,768,1200,755,1260,755,1350,772,1430,775,1500,770,1568,765];
  var right = [0,762,60,757,180,745,240,750,330,752,440,770,540,757,680,745,780,752,860,738];
  var pts = [], i, s = '';
  for (i = 0; i < band.length; i += 2) pts.push([band[i] * 1.186, band[i + 1]]);
  for (i = 0; i < right.length; i += 2) pts.push([right[i] + 1860, right[i + 1]]);

  s += poly(['10,793', '2712,793'], '#f0e8e0');
  s += poly(pts.map(function (p) { return p[0] + ',' + (p[1] + 8); }), '#0c10d0', 4);
  s += poly(pts.map(function (p) { return p[0] + ',' + (p[1] + 5); }), '#b0f0f8', 3);
  for (i = 1; i < pts.length; i++) {
    s += poly([pts[i - 1].join(','), pts[i].join(',')], pts[i][1] > pts[i - 1][1] ? '#18c020' : '#f09a28', 9);
  }
  s += poly(['10,760', '2712,760'], '#7040e0');

  s += '<circle cx="477" cy="783" r="18" fill="#e8c020"/><circle cx="471" cy="777" r="3" fill="#704000"/><circle cx="483" cy="777" r="3" fill="#704000"/>';
  s += txt(488, 805, '天晴', '#e8e8e8', 36);
  s += txt(750, 786, '日出', '#ffffff', 36);
  s += txt(897, 786, '日出', '#ffffff', 36);
  setPlot('p-rain', 672, 159, s);
  setAxis('a-rain', 53, [], [27, 40]);
}

function drawMoney() {
  var s = dots(945), rates = [.25, .4, .15, .5, .3];
  vols.forEach(function (top, i) {
    var h = Math.min((186 - top) * 1.1, 88), x = X(i), r = rates[i * 3 % 5];
    if (i === 166) { h = 135; r = .61; }
    s += box(x - 4.5, 1023 - h, 9, h, '#20d020');
    s += rect(x - 6, 1023 - Math.max(h * r, 9), 12, Math.max(h * r, 9), '#f01818');
  });
  s += poly(path([10,1010,200,1012,640,1005,1000,1012,1400,1005,1568,1012], 1.186, [0,1010,500,1012,780,1008,820,972,850,985], 1860), '#ffff50');
  s += poly(path([10,1012,300,1014,800,1012,1568,1014], 1.186, [0,1012,780,1005,820,985,850,988], 1860), '#d038d0');
  setPlot('p-money', 831, 195, s);
  setAxis('a-money', 65, [['25000', 38]], [38]);
  document.getElementById('a-money').innerHTML += '<rect x="1.5" y="47.5" width="29" height="15" fill="none" stroke="' + LINE + '"/><text x="3" y="59" fill="' + AXIS + '">X1万</text>';
}

function drawDates() {
  var s = '';
  [[4, '2015年'], [150, '2'], [236, '3'], [316, '7'], [430, '8'], [553, '9'], [665, '10'], [748, '11'], [868, '12'], [906, '1']].forEach(function (d, i) {
    if (i) s += rect(d[0] * 3 - 6, 0, 3, 42, LINE);
    s += txt(d[0] * 3, 33, d[1], AXIS, 36);
  });
  setPlot('p-dates', 0, 42, s);
}

drawMain();
drawVol();
drawKdj();
drawWeek();
drawRain();
drawMoney();
drawDates();
```
